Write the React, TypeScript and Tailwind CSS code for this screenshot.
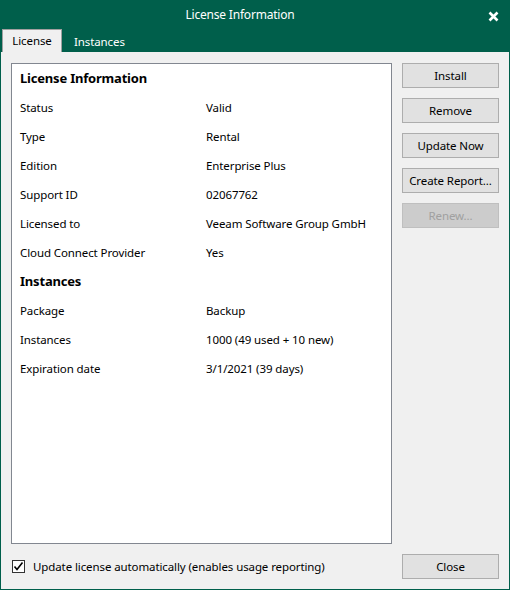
import React from "react";

const font = { fontFamily: '"Segoe UI", "Noto Sans", sans-serif' };

const rows1: [string, string][] = [
  ["Status", "Valid"],
  ["Type", "Rental"],
  ["Edition", "Enterprise Plus"],
  ["Support ID", "02067762"],
  ["Licensed to", "Veeam Software Group GmbH"],
  ["Cloud Connect Provider", "Yes"],
];
const rows2: [string, string][] = [
  ["Package", "Backup"],
  ["Instances", "1000 (49 used + 10 new)"],
  ["Expiration date", "3/1/2021 (39 days)"],
];

function Row({ l, v }: { l: string; v: string }) {
  return (
    <div className="flex h-[29px] items-center">
      <div className="w-[186px]">{l}</div>
      <div>{v}</div>
    </div>
  );
}

function Btn({ children, disabled }: { children: React.ReactNode; disabled?: boolean }) {
  return (
    <div
      className={`flex h-[25px] w-[97px] items-center justify-center border ${
        disabled ? "border-[#bfbfbf] bg-[#cccccc] text-[#a0a0a0]" : "border-[#adadad] bg-[#e1e1e1] text-black"
      }`}
    >
      {children}
    </div>
  );
}

export default function App() {
  return (
    <div
      className="flex h-[590px] w-[510px] flex-col border border-[#005f4b] bg-[#005f4b] text-[11.5px] tracking-[-0.1px] text-black"
      style={font}
    >
      <div className="relative flex h-[28px] shrink-0 items-center justify-center pr-[30px] text-[12px] tracking-[-0.2px] text-white">
        License Information
        <svg className="absolute right-[10px] top-[10px]" width="11" height="11" viewBox="0 0 11 11">
          <path d="M1.5 1.5 L9.5 9.5 M9.5 1.5 L1.5 9.5" stroke="white" strokeWidth="2.6" strokeLinecap="butt" />
        </svg>
      </div>
      <div className="flex h-[23px] shrink-0 items-end pl-[1px]">
        <div className="flex h-[23px] w-[60px] items-center justify-center border border-b-0 border-[#a0a0a0] bg-[#f0f0f0]">
          License
        </div>
        <div className="flex h-[21px] items-center pl-[12px] text-white">Instances</div>
      </div>
      <div className="flex flex-1 flex-col bg-[#f0f0f0] px-[10px] pt-[11px] pb-[10px]">
        <div className="flex flex-1 gap-[10px]">
          <div className="h-[481px] w-[381px] border border-[#828790] bg-white pl-[8px]">
            <div className="flex h-[29px] items-center text-[13px] font-bold tracking-[-0.2px]">License Information</div>
            {rows1.map(([l, v]) => (
              <Row key={l} l={l} v={v} />
            ))}
            <div className="flex h-[29px] items-center text-[13px] font-bold tracking-[-0.2px]">Instances</div>
            {rows2.map(([l, v]) => (
              <Row key={l} l={l} v={v} />
            ))}
          </div>
          <div className="flex flex-col gap-[10px]">
            <Btn>Install</Btn>
            <Btn>Remove</Btn>
            <Btn>Update Now</Btn>
            <Btn>Create Report...</Btn>
            <Btn disabled>Renew...</Btn>
          </div>
        </div>
        <div className="mt-[10px] flex items-center justify-between">
          <div className="flex items-center gap-[8px] pl-[1px]">
            <div className="flex h-[13px] w-[13px] items-center justify-center border border-[#333333] bg-white">
              <svg width="11" height="11" viewBox="0 0 11 11">
                <path d="M1.5 5.5 L4 8.5 L9.5 1.5" fill="none" stroke="#000" strokeWidth="1.6" />
              </svg>
            </div>
            <span>Update license automatically (enables usage reporting)</span>
          </div>
          <Btn>Close</Btn>
        </div>
      </div>
    </div>
  );
}
